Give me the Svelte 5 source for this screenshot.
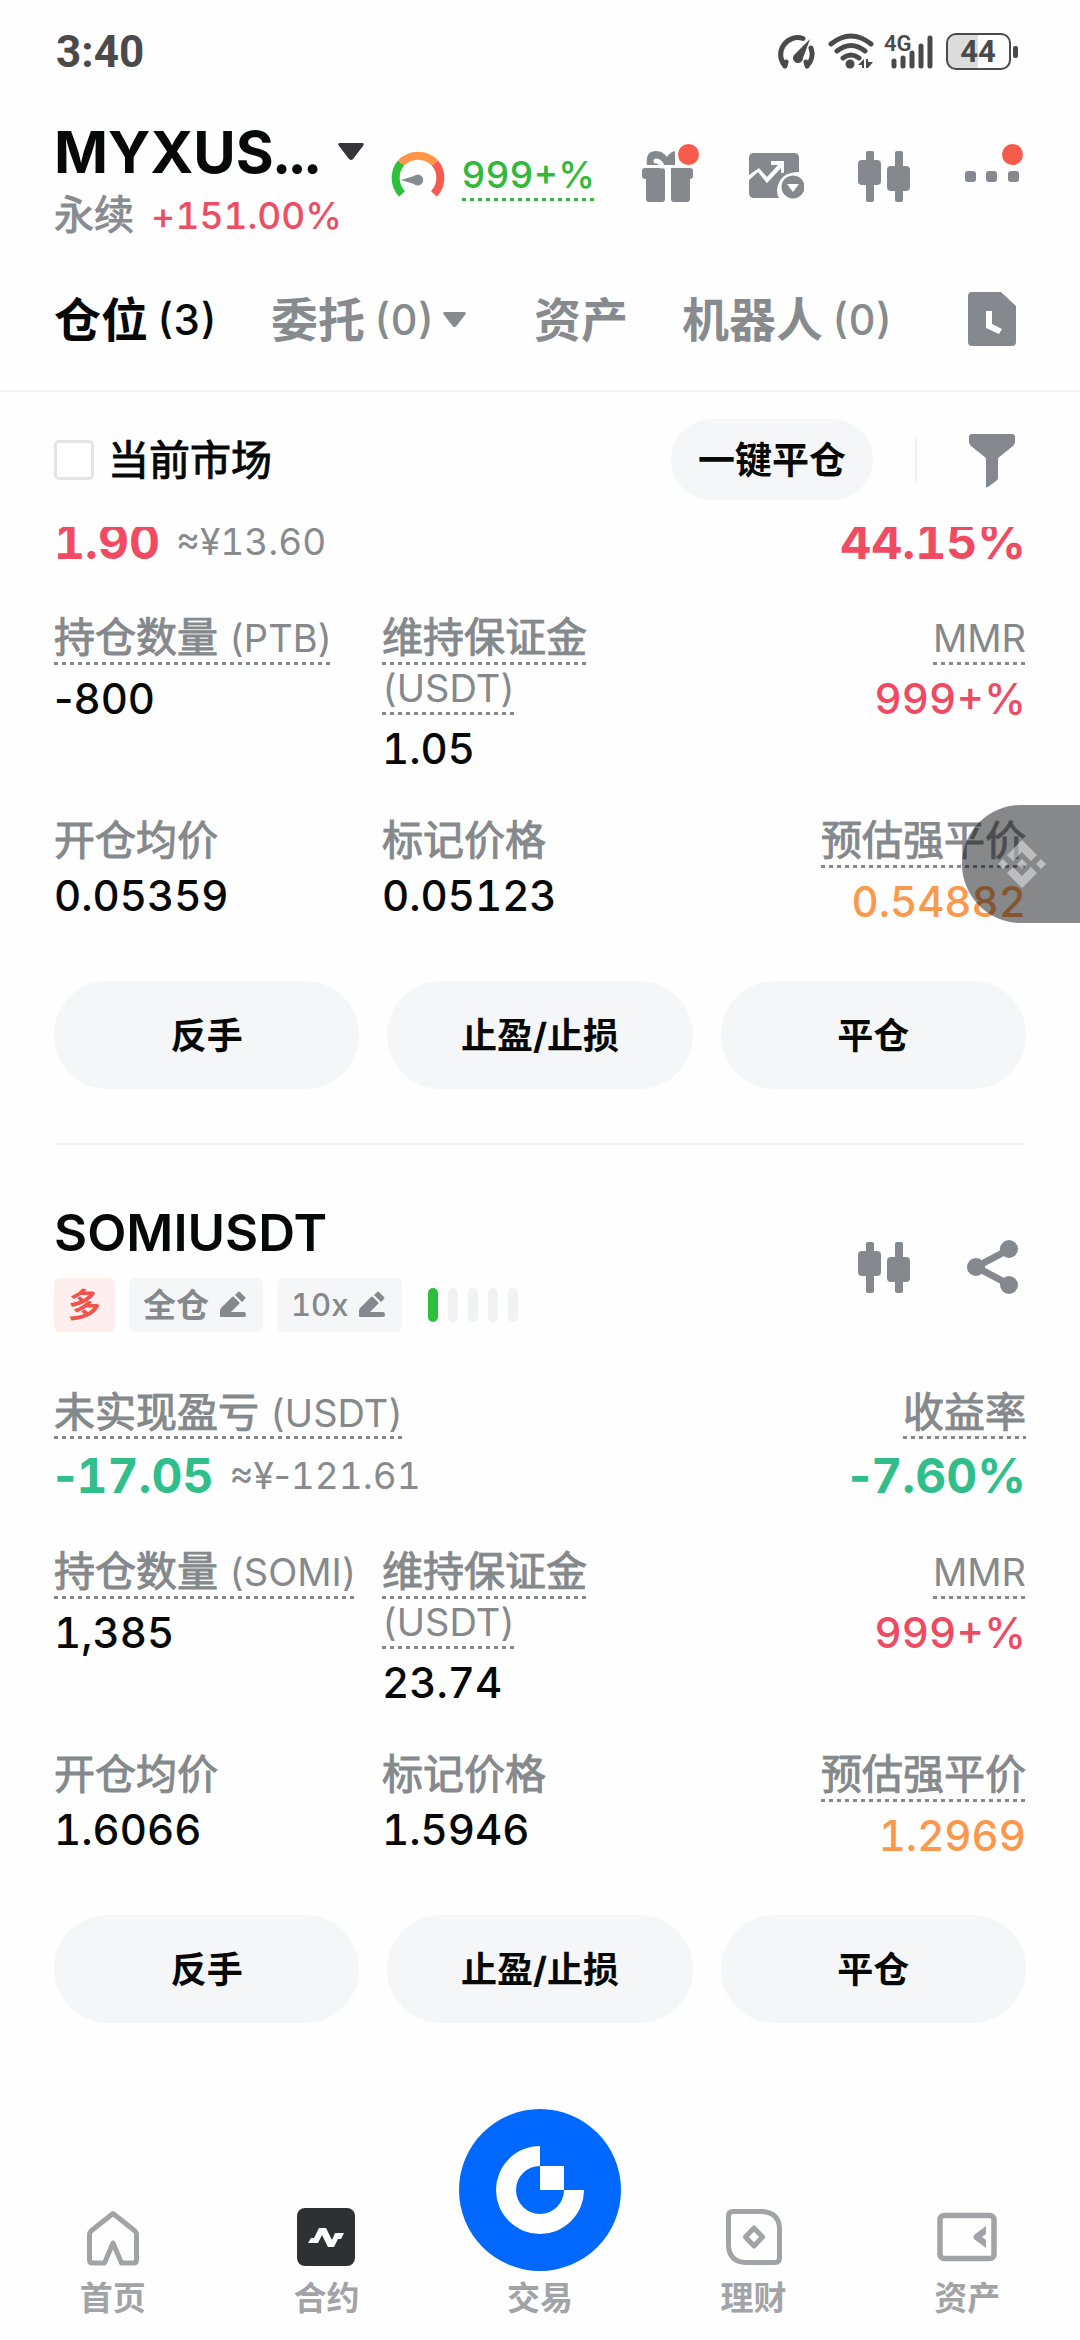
<script>
  const tabs = [
    { name: '仓位', count: '(3)', active: true },
    { name: '委托', count: '(0)', menu: true },
    { name: '资产' },
    { name: '机器人', count: '(0)' }
  ];

  const actions = ['反手', '止盈/止损', '平仓'];

  const positions = [
    {
      id: 'ptb',
      unit: '(PTB)',
      tone: 'up',
      pnl: '1.90',
      fiat: '≈¥13.60',
      roi: '44.15%',
      size: '-800',
      margin: '1.05',
      mmr: '999+%',
      entry: '0.05359',
      mark: '0.05123',
      liq: '0.54882'
    },
    {
      id: 'somi',
      symbol: 'SOMIUSDT',
      side: '多',
      mode: '全仓',
      leverage: '10x',
      unit: '(SOMI)',
      tone: 'down',
      pnl: '-17.05',
      fiat: '≈¥-121.61',
      roi: '-7.60%',
      size: '1,385',
      margin: '23.74',
      mmr: '999+%',
      entry: '1.6066',
      mark: '1.5946',
      liq: '1.2969'
    }
  ];

  let onlyCurrent = $state(false);

  // Digits are tabular; signs keep their proportional width.
  const parts = (text) => text.split(/([-+%]+)/).filter(Boolean);
</script>

{#snippet num(text)}{#each parts(text) as part}{#if /[-+%]/.test(part)}<span class="sign">{part}</span>{:else}{part}{/if}{/each}{/snippet}

{#snippet candles()}
  <svg class="icon" viewBox="0 0 56 56" aria-hidden="true">
    <g fill="currentColor">
      <rect x="10" y="3" width="8" height="51" rx="2" />
      <rect x="2" y="12" width="23" height="25" rx="4" />
      <rect x="39" y="3" width="8" height="51" rx="2" />
      <rect x="31" y="18" width="23" height="25" rx="4" />
    </g>
  </svg>
{/snippet}

{#snippet pencil()}
  <svg class="pencil" viewBox="0 0 28 28" aria-hidden="true">
    <path fill="currentColor" d="M2 26q-1 0-1-1v-5q0-2 1-3L13 6q1-1 2 0l5 5q1 1 0 2l-8 8h13q2 0 2 2.500t-2 2.500zM16 4l3-3q1-1 2 0l5 5q1 1 0 2l-3 3z" />
  </svg>
{/snippet}

<div class="screen">
  <div class="status">
    <span class="clock">3:40</span>
    <svg class="indicators" viewBox="0 0 244 40" role="img" aria-label="4G 44">
      <g fill="none" stroke="#4a4a4a" stroke-width="5" stroke-linecap="round">
        <path d="M9 34A17 17 0 0 1 27 6.500M35 16A17 17 0 0 1 31 34M9 34l1-4M31 34l-1-4" />
        <path d="M55 12Q75-4 95 12M61 19q14-11 28 0M67 26q8-6 16 0" />
        <path d="M118 29v5M127 26v8M136 21v13M145 14v20M154 6v28" />
      </g>
      <path fill="#4a4a4a" d="M34 7l-7 19a5 5 0 1 1-8-4z" />
      <circle cx="74" cy="32" r="4.500" fill="#4a4a4a" />
      <path fill="#4a4a4a" d="M82 33l6-6v9h-2v-3zM90 27h2v3h5l-5 6h-2z" />
      <text x="108" y="19" class="net">4G</text>
      <path fill="#dcdcdc" d="M181 3h-3q-7 0-7 8v18q0 8 7 8h24V3z" />
      <rect x="171" y="2" width="63" height="35" rx="9" fill="none" stroke="#4a4a4a" stroke-width="2" />
      <text x="202" y="30" text-anchor="middle" class="batt">44</text>
      <rect x="237" y="14" width="5" height="12" rx="2" fill="#4a4a4a" />
    </svg>
  </div>

  <header class="header">
    <div class="pair">
      <button class="pair-name">
        <span>MYXUS...</span>
        <svg class="caret" viewBox="0 0 26 18" aria-hidden="true"><path fill="#34363a" d="M2 0h22q3 0 1 3L15 16q-2 2-4 0L1 3Q-1 0 2 0z" /></svg>
      </button>
      <div class="pair-sub"><span class="cjk">永续</span> <span class="change">{@render num('+151.00%')}</span></div>
    </div>
    <div class="risk">
      <svg class="gauge" viewBox="0 0 56 56" aria-hidden="true">
        <g fill="none" stroke-width="8">
          <path stroke="#2dc03a" d="M12 46A23.500 23.500 0 0 1 11 15" />
          <path stroke="#fe9546" d="M11 15A23.500 23.500 0 0 1 45 15" />
          <path stroke="#f65b50" d="M45 15A23.500 23.500 0 0 1 44 46" />
        </g>
        <path fill="#888b8f" d="M11 32l13-4a5.500 5.500 0 1 1 0 8z" />
      </svg>
      <span class="ratio dotted">{@render num('999+%')}</span>
    </div>
    <div class="tools">
      <button class="tool" aria-label="奖励">
        <svg class="icon" viewBox="0 0 56 56" aria-hidden="true">
          <path fill="currentColor" d="M5 20h17q3 0 3 3v28q0 3-3 3H9q-3 0-3-3V31q-4 0-4-3v-5q0-3 3-3zM31 20h19q3 0 3 3v5q0 3-3 3v20q0 3-3 3H34q-3 0-3-3zM7 17q-2-14 9-14 7 0 11 6 3-5 8-6v14z" />
          <path fill="none" stroke="#fefefe" stroke-width="5" stroke-linecap="round" d="M16 13q4 0 6 5" />
        </svg>
        <i class="badge"></i>
      </button>
      <button class="tool" aria-label="行情图">
        <svg class="icon" viewBox="0 0 56 56" aria-hidden="true">
          <path fill="currentColor" d="M6 5h40q5 0 5 5v14q-20 0-22 18 0 5 2 8H6q-5 0-5-5V32l9-8 8 10q0 2 2 0l13-14v5h3V13H23v4h7L19 29l-8-9L1 27V10q0-5 5-5z" />
          <path fill="currentColor" fill-rule="evenodd" d="M45 27.500a11.500 11.500 0 1 0 .01 0zM39 36h12l-6 8z" />
        </svg>
      </button>
      <button class="tool" aria-label="K线">{@render candles()}</button>
      <button class="tool" aria-label="更多">
        <svg class="icon" viewBox="0 0 56 56" aria-hidden="true">
          <g fill="currentColor"><rect x="1" y="23" width="11" height="11" rx="3" /><rect x="22" y="23" width="11" height="11" rx="3" /><rect x="44" y="23" width="11" height="11" rx="3" /></g>
        </svg>
        <i class="badge"></i>
      </button>
    </div>
  </header>

  <nav class="tabs">
    {#each tabs as tab (tab.name)}
      <button class="tab" class:active={tab.active}>
        <b>{tab.name}</b>
        {#if tab.count}<span class="count">{tab.count}</span>{/if}
        {#if tab.menu}
          <svg class="caret small" viewBox="0 0 26 18" aria-hidden="true"><path fill="currentColor" d="M2 0h22q3 0 1 3L15 16q-2 2-4 0L1 3Q-1 0 2 0z" /></svg>
        {/if}
      </button>
    {/each}
    <button class="tool last" aria-label="历史记录">
      <svg class="icon" viewBox="0 0 56 56" aria-hidden="true">
        <path fill="currentColor" fill-rule="evenodd" d="M8 1h29l15 14v36q0 4-4 4H8q-4 0-4-4V5q0-4 4-4zM22 20v17l13 6 3-5-10-5V20z" />
      </svg>
    </button>
  </nav>

  <div class="filter">
    <label class="check"><input type="checkbox" bind:checked={onlyCurrent} /><span class="cjk">当前市场</span></label>
    <button class="close-all">一键平仓</button>
    <span class="sep"></span>
    <button class="tool" aria-label="筛选">
      <svg class="icon" viewBox="0 0 56 56" aria-hidden="true">
        <path fill="currentColor" d="M8 2h40q3 0 3 3v5q0 2-2 4L34 26v20q0 2-2 3l-8 6q-2 1-2-1V26L7 14q-2-2-2-4V5q0-3 3-3z" />
      </svg>
    </button>
  </div>

  <main class="list">
    {#each positions as p (p.id)}
      <article class="card">
        {#if p.symbol}
          <div class="head">
            <div>
              <h2>{p.symbol}</h2>
              <div class="tags">
                <span class="tag side">{p.side}</span>
                <button class="tag"><b>{p.mode}</b>{@render pencil()}</button>
                <button class="tag"><span class="lever">{p.leverage}</span>{@render pencil()}</button>
                <span class="level"><i class="on"></i><i></i><i></i><i></i><i></i></span>
              </div>
            </div>
            <div class="tools">
              <button class="tool" aria-label="K线">{@render candles()}</button>
              <button class="tool" aria-label="分享">
                <svg class="icon" viewBox="0 0 56 56" aria-hidden="true">
                  <path d="M46 10L12 28l34 18" fill="none" stroke="currentColor" stroke-width="7" />
                  <g fill="currentColor"><circle cx="45" cy="10" r="9" /><circle cx="12" cy="28" r="9" /><circle cx="45" cy="46" r="9" /></g>
                </svg>
              </button>
            </div>
          </div>
          <div class="line labels">
            <span class="label cjk dotted">未实现盈亏 <span class="unit">(USDT)</span></span>
            <span class="label cjk dotted">收益率</span>
          </div>
        {/if}
        <div class="line pnl {p.tone}" class:cut={!p.symbol}>
          <strong>{@render num(p.pnl)}</strong>
          <span class="fiat">{@render num(p.fiat)}</span>
          <strong class="roi">{@render num(p.roi)}</strong>
        </div>
        <div class="grid">
          <div class="cell">
            <div><span class="label cjk dotted">持仓数量 <span class="unit">{p.unit}</span></span></div>
            <div class="value">{@render num(p.size)}</div>
          </div>
          <div class="cell">
            <div><span class="label cjk dotted">维持保证金 <span class="unit">(USDT)</span></span></div>
            <div class="value">{p.margin}</div>
          </div>
          <div class="cell end">
            <div><span class="label dotted"><span class="unit">MMR</span></span></div>
            <div class="value red">{@render num(p.mmr)}</div>
          </div>
          <div class="cell plain">
            <div><span class="label cjk">开仓均价</span></div>
            <div class="value">{p.entry}</div>
          </div>
          <div class="cell plain">
            <div><span class="label cjk">标记价格</span></div>
            <div class="value">{p.mark}</div>
          </div>
          <div class="cell end">
            <div><span class="label cjk dotted">预估强平价</span></div>
            <div class="value orange">{p.liq}</div>
          </div>
        </div>
        <div class="actions">
          {#each actions as a (a)}<button>{a}</button>{/each}
        </div>
      </article>
    {/each}
  </main>

  <nav class="bottom">
    <a href="#home">
      <span class="nav-icon">
        <svg viewBox="0 0 60 60" aria-hidden="true"><path fill="none" stroke="currentColor" stroke-width="5" stroke-linejoin="round" d="M30 6.500L52 24q1.500 1.500 1.500 4v25q0 3-3 3H38.500L30 36l-8.500 20H9.500q-3 0-3-3V28q0-2.500 1.500-4z" /></svg>
      </span>
      首页
    </a>
    <a href="#futures">
      <span class="nav-icon">
        <svg viewBox="0 0 60 60" aria-hidden="true"><rect x="1" y="1" width="58" height="58" rx="8" fill="#2e3033" /><path fill="#fff" d="M12 36l3-5h3l5-10h7l6 12 3-7h9l-3 6h-3l-4 8h-6l-6-12-4 8z" /></svg>
      </span>
      合约
    </a>
    <a href="#trade">
      <svg class="trade" viewBox="0 0 162 162" aria-hidden="true">
        <circle cx="81" cy="81" r="81" fill="#0068ff" />
        <path fill="#fff" d="M81 37v20a24 24 0 1 0 24 24h20a44 44 0 1 1-44-44z" />
        <path fill="#fff" d="M81 57h24v24H81z" />
      </svg>
      交易
    </a>
    <a href="#earn">
      <span class="nav-icon">
        <svg viewBox="0 0 60 60" aria-hidden="true"><g fill="none" stroke="currentColor" stroke-width="5"><path d="M8 4.500h30q17 1 17.500 17V51q0 4.500-4.500 4.500H22Q5 55 4.500 38V9q0-4.500 4.500-4.500z" /><path stroke-linejoin="round" d="M30 21l8.500 9-8.500 9-8.500-9z" /></g></svg>
      </span>
      理财
    </a>
    <a href="#assets">
      <span class="nav-icon">
        <svg viewBox="0 0 60 60" aria-hidden="true"><rect x="3" y="8.500" width="54" height="43" rx="4" fill="none" stroke="currentColor" stroke-width="5.500" /><path fill="currentColor" d="M49 19v8l-4 3 4 3v8l-12-9q-1-2 0-4z" /></svg>
      </span>
      资产
    </a>
  </nav>

  <button class="floating" aria-label="悬浮窗">
    <svg viewBox="0 0 48 48" aria-hidden="true">
      <path fill="#fff" d="M24 0l15 15-6 6-9-9-9 9-6-6zM24 48L9 33l6-6 9 9 9-9 6 6zM5 19l5 5-5 5-5-5zM43 19l5 5-5 5-5-5zM24 19l5 5-5 5-5-5z" />
    </svg>
  </button>
</div>

<style>
  :global(body) {
    margin: 0;
    background: #fefefe;
  }
  .screen {
    position: relative;
    display: flex;
    flex-direction: column;
    min-height: 100vh;
    box-sizing: border-box;
    color: #070909;
    font-family: Inter, 'Noto Sans CJK SC', sans-serif;
    font-variant-numeric: tabular-nums;
  }
  button {
    margin: 0;
    padding: 0;
    border: 0;
    background: none;
    color: inherit;
    font: inherit;
    font-variant-numeric: inherit;
  }
  svg {
    display: block;
  }
  /* Medium weight for Chinese text, between the regular and bold faces. */
  .cjk {
    -webkit-text-stroke: 1px currentColor;
  }
  .sign {
    font-variant-numeric: proportional-nums;
  }
  .status {
    display: flex;
    align-items: center;
    justify-content: space-between;
    height: 104px;
    padding: 0 60px 0 56px;
  }
  .clock {
    color: #4a4a4a;
    font: 700 44px Roboto, sans-serif;
  }
  .indicators {
    width: 244px;
    height: 40px;
  }
  .net {
    font: 600 22px Roboto, sans-serif;
    fill: #4a4a4a;
  }
  .batt {
    font: 700 31px Roboto, sans-serif;
    fill: #4a4a4a;
  }
  .header {
    display: flex;
    align-items: center;
    height: 144px;
    padding: 0 60px 0 54px;
  }
  .pair {
    flex: 1;
    padding-top: 10px;
  }
  .pair-name {
    display: flex;
    align-items: center;
    gap: 18px;
    font-size: 58px;
    font-weight: 700;
    line-height: 68px;
  }
  .caret {
    width: 26px;
    height: 18px;
  }
  .caret.small {
    width: 23px;
    height: 16px;
    margin-right: 14px;
  }
  .pair-sub {
    color: #888b8f;
    font-size: 40px;
    line-height: 58px;
  }
  .change {
    margin-left: 6px;
    color: #ea4f66;
    font-size: 37px;
    font-weight: 500;
  }
  .risk {
    display: flex;
    align-items: center;
    gap: 16px;
    margin-right: 45px;
  }
  .gauge {
    width: 56px;
    height: 56px;
  }
  .ratio {
    color: #32b83a;
    font-size: 37px;
    font-weight: 500;
    line-height: 46px;
  }
  .dotted {
    padding-bottom: 3px;
    background: linear-gradient(90deg, currentColor 50%, transparent 50%) left bottom / 8px 3px repeat-x;
    -webkit-box-decoration-break: clone;
    box-decoration-break: clone;
  }
  .tools {
    display: flex;
    gap: 52px;
    color: #85898d;
  }
  .tool {
    position: relative;
    width: 56px;
    height: 56px;
    color: #85898d;
  }
  .icon {
    width: 56px;
    height: 56px;
  }
  .badge {
    position: absolute;
    top: -4px;
    right: -3px;
    width: 21px;
    height: 21px;
    border-radius: 50%;
    background: #f65b4c;
  }
  .tabs {
    display: flex;
    align-items: center;
    gap: 54px;
    height: 142px;
    padding: 0 60px 0 54px;
    border-bottom: 2px solid #f1f2f3;
  }
  .tab {
    display: flex;
    align-items: center;
    gap: 9px;
    padding-top: 2px;
    color: #888b8e;
    font-size: 47px;
    line-height: 60px;
  }
  .tab.active {
    color: #070909;
  }
  .count {
    font-size: 42px;
    font-weight: 500;
  }
  .last {
    margin-left: auto;
  }
  .filter {
    display: flex;
    align-items: center;
    height: 135px;
    padding: 0 60px 0 54px;
  }
  .check {
    display: flex;
    align-items: center;
    gap: 14px;
    margin-right: auto;
    font-size: 41px;
  }
  .check span {
    padding-bottom: 5px;
  }
  .check input {
    appearance: none;
    width: 40px;
    height: 40px;
    margin: 0;
    border: 3px solid #e3e4e5;
    border-radius: 5px;
    background: #fff;
  }
  .check input:checked {
    background: #070909;
  }
  .close-all {
    height: 81px;
    padding: 0 27px 4px;
    border-radius: 41px;
    background: #f4f6f7;
    font-size: 37px;
    font-weight: 700;
  }
  .sep {
    width: 2px;
    height: 42px;
    margin: 0 47px 0 42px;
    background: #eceeef;
  }
  .list {
    overflow: hidden;
    padding: 0 54px;
  }
  .card + .card {
    margin-top: 54px;
    border-top: 2px solid #f0f1f3;
    padding-top: 57px;
  }
  .head {
    display: flex;
    align-items: center;
    justify-content: space-between;
    padding-right: 6px;
  }
  h2 {
    margin: 0;
    font-size: 51px;
    font-weight: 600;
    line-height: 62px;
  }
  .tags {
    display: flex;
    gap: 14px;
    margin-top: 14px;
  }
  .tag {
    display: flex;
    align-items: center;
    gap: 10px;
    height: 54px;
    padding: 0 16px 0 14px;
    border-radius: 6px;
    background: #f4f6f7;
    color: #85898d;
    font-size: 33px;
    line-height: 54px;
  }
  .tag.side {
    padding: 0 14px;
    background: #ffeeee;
    color: #f0554c;
    font-weight: 700;
  }
  .lever {
    font-size: 31px;
    font-weight: 500;
  }
  .pencil {
    width: 28px;
    height: 28px;
  }
  .level {
    display: flex;
    align-items: center;
    gap: 10px;
    margin-left: 12px;
  }
  .level i {
    width: 10px;
    height: 34px;
    border-radius: 5px;
    background: #f1f2f3;
  }
  .level .on {
    background: #2dc03a;
  }
  .line {
    display: flex;
    align-items: center;
    justify-content: space-between;
  }
  .labels {
    margin-top: 57px;
    line-height: 47px;
  }
  .label {
    color: #85898c;
    font-size: 41px;
  }
  .unit {
    font-size: 38px;
    line-height: 1;
    -webkit-text-stroke: 0;
  }
  .pnl {
    margin-top: 7px;
    line-height: 60px;
  }
  .pnl.cut {
    margin-top: -15px;
  }
  .pnl strong {
    font-size: 48px;
    font-weight: 700;
  }
  .up {
    color: #f04b62;
  }
  .down {
    color: #30be8a;
  }
  .fiat {
    margin-left: 16px;
    color: #888b8e;
    font-size: 37px;
  }
  .roi {
    margin-left: auto;
  }
  .grid {
    display: grid;
    grid-template-columns: repeat(3, 1fr);
    gap: 42px 12px;
    margin-top: 40px;
  }
  .cell {
    font-size: 41px;
    line-height: 50px;
  }
  .value {
    margin-top: 13px;
    font-size: 42px;
    font-weight: 500;
    line-height: 48px;
  }
  .plain .value {
    margin-top: 7px;
  }
  .end {
    text-align: right;
  }
  .red {
    color: #ee4b63;
  }
  .orange {
    color: #fb984c;
  }
  .actions {
    display: grid;
    grid-template-columns: repeat(3, 1fr);
    gap: 28px;
    margin-top: 55px;
  }
  .actions button {
    height: 108px;
    padding-bottom: 4px;
    border-radius: 54px;
    background: #f4f6f7;
    font-size: 36px;
    font-weight: 700;
  }
  .bottom {
    display: grid;
    grid-template-columns: repeat(5, 1fr);
    margin-top: auto;
    padding: 0 6px 22px;
  }
  .bottom a {
    display: flex;
    flex-direction: column;
    align-items: center;
    justify-content: flex-end;
    gap: 7px;
    color: #a1a3a6;
    font-size: 33px;
    font-weight: 700;
    line-height: 40px;
    text-decoration: none;
  }
  .nav-icon {
    display: flex;
    align-items: center;
    height: 68px;
  }
  .nav-icon svg {
    width: 60px;
    height: 60px;
  }
  .trade {
    width: 162px;
    height: 162px;
  }
  .floating {
    position: absolute;
    top: 805px;
    right: 0;
    display: flex;
    align-items: center;
    width: 118px;
    height: 118px;
    padding-left: 36px;
    border-radius: 59px 0 0 59px;
    background: rgba(16, 18, 20, 0.5);
  }
  .floating svg {
    width: 48px;
    height: 48px;
    opacity: 0.45;
  }
</style>
